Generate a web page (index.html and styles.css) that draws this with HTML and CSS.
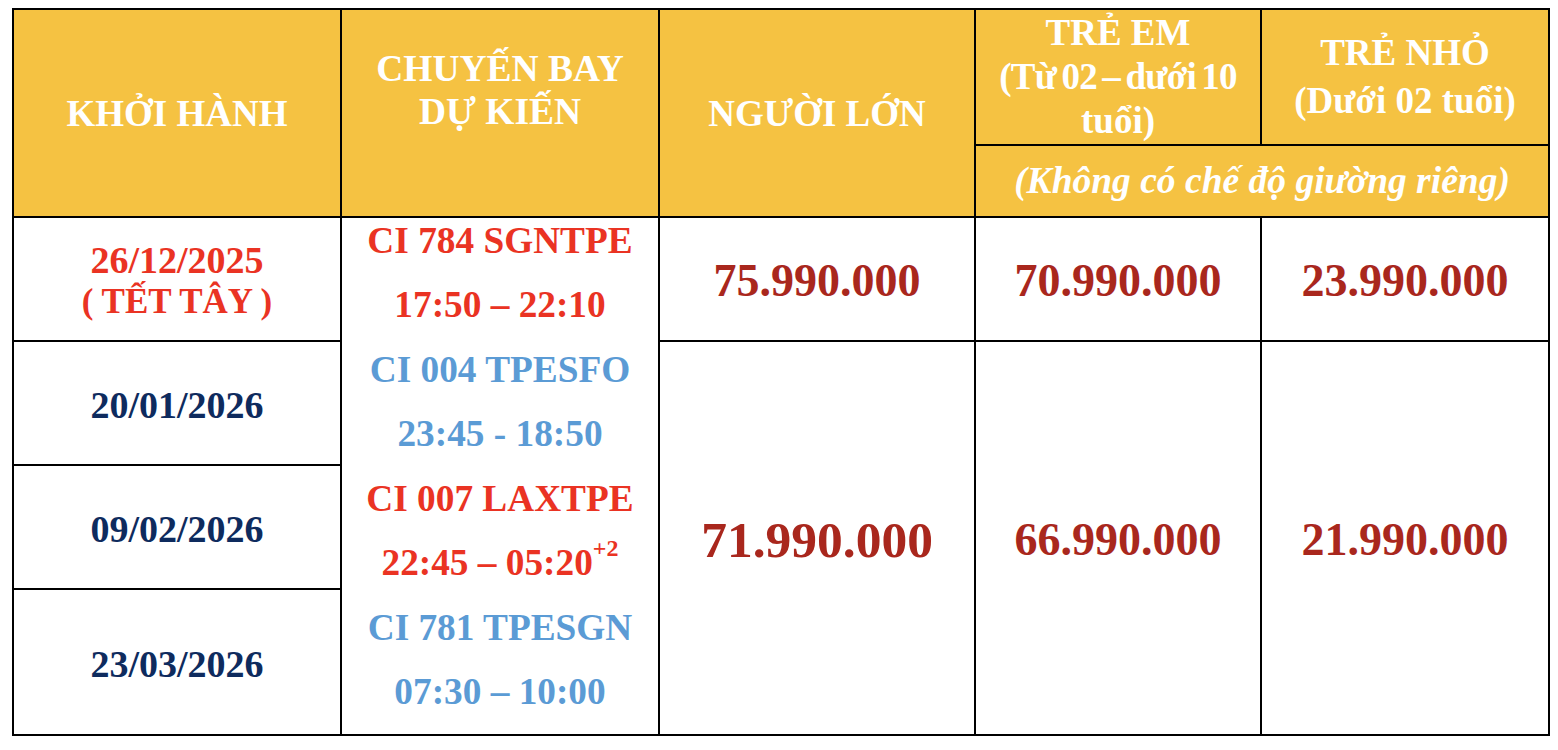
FILE: index.html
```html
<!DOCTYPE html>
<html lang="vi">
<head>
<meta charset="utf-8">
<title>Bảng giá tour</title>
<link rel="stylesheet" href="styles.css">
</head>
<body>
<table class="tour">
  <colgroup>
    <col class="c1"><col class="c2"><col class="c3"><col class="c4"><col class="c5">
  </colgroup>
  <thead>
    <tr class="h1">
      <th rowspan="2" class="hd">KHỞI HÀNH</th>
      <th rowspan="2" class="hd hd-flight">CHUYẾN BAY<br>DỰ KIẾN</th>
      <th rowspan="2" class="hd">NGƯỜI LỚN</th>
      <th class="hd hd-child">TRẺ EM<br><span class="tight">(Từ 02 – dưới 10</span><br>tuổi)</th>
      <th class="hd hd-infant">TRẺ NHỎ<br>(Dưới 02 tuổi)</th>
    </tr>
    <tr class="h2">
      <th colspan="2" class="hd hd-note">(Không có chế độ giường riêng)</th>
    </tr>
  </thead>
  <tbody>
    <tr class="r1">
      <td class="date date-red">26/12/2025<br><span class="holiday">( TẾT TÂY )</span></td>
      <td rowspan="4" class="flights">
        <div class="flight">
          <div class="fl red">CI 784 SGNTPE</div>
          <div class="fl red">17:50 – 22:10</div>
        </div>
        <div class="flight">
          <div class="fl blue">CI 004 TPESFO</div>
          <div class="fl blue">23:45 - 18:50</div>
        </div>
        <div class="flight">
          <div class="fl red">CI 007 LAXTPE</div>
          <div class="fl red">22:45 – 05:20<sup class="plus">+2</sup></div>
        </div>
        <div class="flight">
          <div class="fl blue">CI 781 TPESGN</div>
          <div class="fl blue">07:30 – 10:00</div>
        </div>
      </td>
      <td class="price">75.990.000</td>
      <td class="price">70.990.000</td>
      <td class="price">23.990.000</td>
    </tr>
    <tr class="r2">
      <td class="date date-navy">20/01/2026</td>
      <td rowspan="3" class="price price-big">71.990.000</td>
      <td rowspan="3" class="price">66.990.000</td>
      <td rowspan="3" class="price">21.990.000</td>
    </tr>
    <tr class="r3">
      <td class="date date-navy">09/02/2026</td>
    </tr>
    <tr class="r4">
      <td class="date date-navy">23/03/2026</td>
    </tr>
  </tbody>
</table>
</body>
</html>
```
FILE: styles.css
```css
html, body {
  margin: 0;
  padding: 0;
  background: #ffffff;
}

body {
  font-family: "Liberation Serif", "Times New Roman", serif;
  font-weight: bold;
}

.tour {
  border-collapse: collapse;
  table-layout: fixed;
  width: 1538px;
  margin: 8px 0 0 12px;
}

.c1 { width: 328px; }
.c2 { width: 318px; }
.c3 { width: 316px; }
.c4 { width: 286px; }
.c5 { width: 288px; }

.tour th,
.tour td {
  border: 2px solid #000000;
  padding: 0;
  text-align: center;
  vertical-align: middle;
}

.h1 { height: 136px; }
.h2 { height: 72px; }
.r1 { height: 124px; }
.r2 { height: 124px; }
.r3 { height: 124px; }
.r4 { height: 146px; }

.hd {
  background: #f5c242;
  color: #ffffff;
  font-size: 37px;
  font-weight: bold;
  line-height: 43px;
}

.tour th.hd-flight {
  font-size: 37.5px;
  padding-bottom: 46px;
}

.hd-child {
  line-height: 44px;
}

.tight {
  letter-spacing: -0.8px;
  word-spacing: -3px;
}

.hd-infant {
  line-height: 48px;
}

.hd-note {
  font-style: italic;
  font-size: 37.5px;
  line-height: 40px;
}

.tour td.date {
  font-size: 38px;
  line-height: 40px;
  padding-top: 4px;
}

.holiday {
  font-size: 35px;
}

.date-red { color: #ea3323; }
.date-navy { color: #0e2b5e; }

.tour td.flights {
  vertical-align: top;
}

.flight {
  display: flex;
  flex-direction: column;
  gap: 18px;
  margin-bottom: 19px;
}

.fl {
  font-size: 37.3px;
  line-height: 46px;
  white-space: nowrap;
}

.red { color: #ea3323; }
.blue { color: #5b9bd5; }

.plus {
  font-size: 24px;
  line-height: 0;
  vertical-align: 19px;
}

.tour td.price {
  color: #a9271d;
  font-size: 46px;
  line-height: 50px;
  padding-top: 3px;
}

.tour td.price-big {
  font-size: 51.5px;
}
```
